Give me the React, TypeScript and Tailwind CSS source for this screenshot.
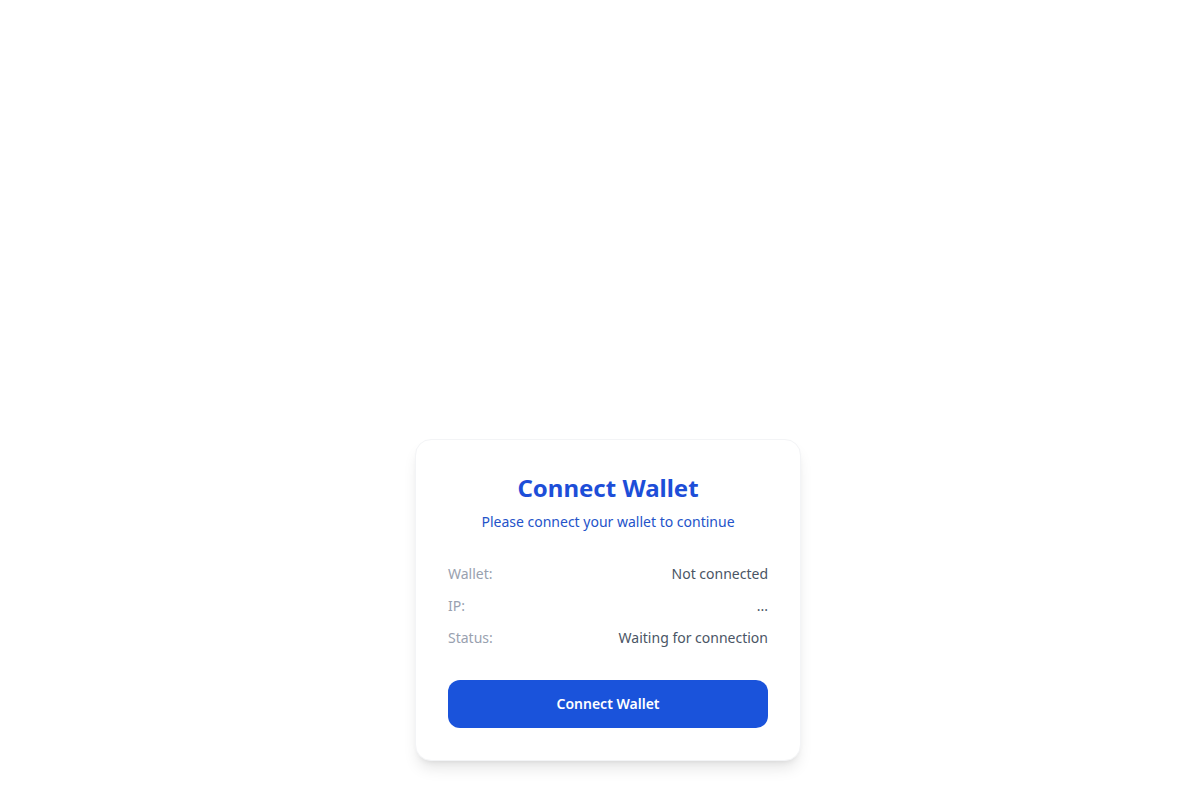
import React from 'react';

const rows = [
  { label: 'Wallet:', value: 'Not connected' },
  { label: 'IP:', value: '...' },
  { label: 'Status:', value: 'Waiting for connection' },
];

export default function App() {
  return (
    <div
      className="min-h-screen bg-white flex items-end justify-center pl-4 pb-[39px]"
      style={{ fontFamily: '"Noto Sans", "Open Sans", sans-serif' }}
    >
      <div className="w-[386px] bg-white rounded-2xl border border-gray-100 shadow-lg p-8">
        <h1 className="text-2xl font-bold text-center text-[#1d4ed8]">Connect Wallet</h1>
        <p className="mt-2 text-sm text-center text-[#2453c9]">Please connect your wallet to continue</p>

        <div className="mt-8 flex flex-col gap-3">
          {rows.map((r) => (
            <div key={r.label} className="flex items-center justify-between text-sm">
              <span className="text-gray-400">{r.label}</span>
              <span className="text-gray-600">{r.value}</span>
            </div>
          ))}
        </div>

        <button className="mt-8 w-full py-3.5 rounded-xl bg-[#1a53db] text-white text-sm font-semibold">
          Connect Wallet
        </button>
      </div>
    </div>
  );
}
